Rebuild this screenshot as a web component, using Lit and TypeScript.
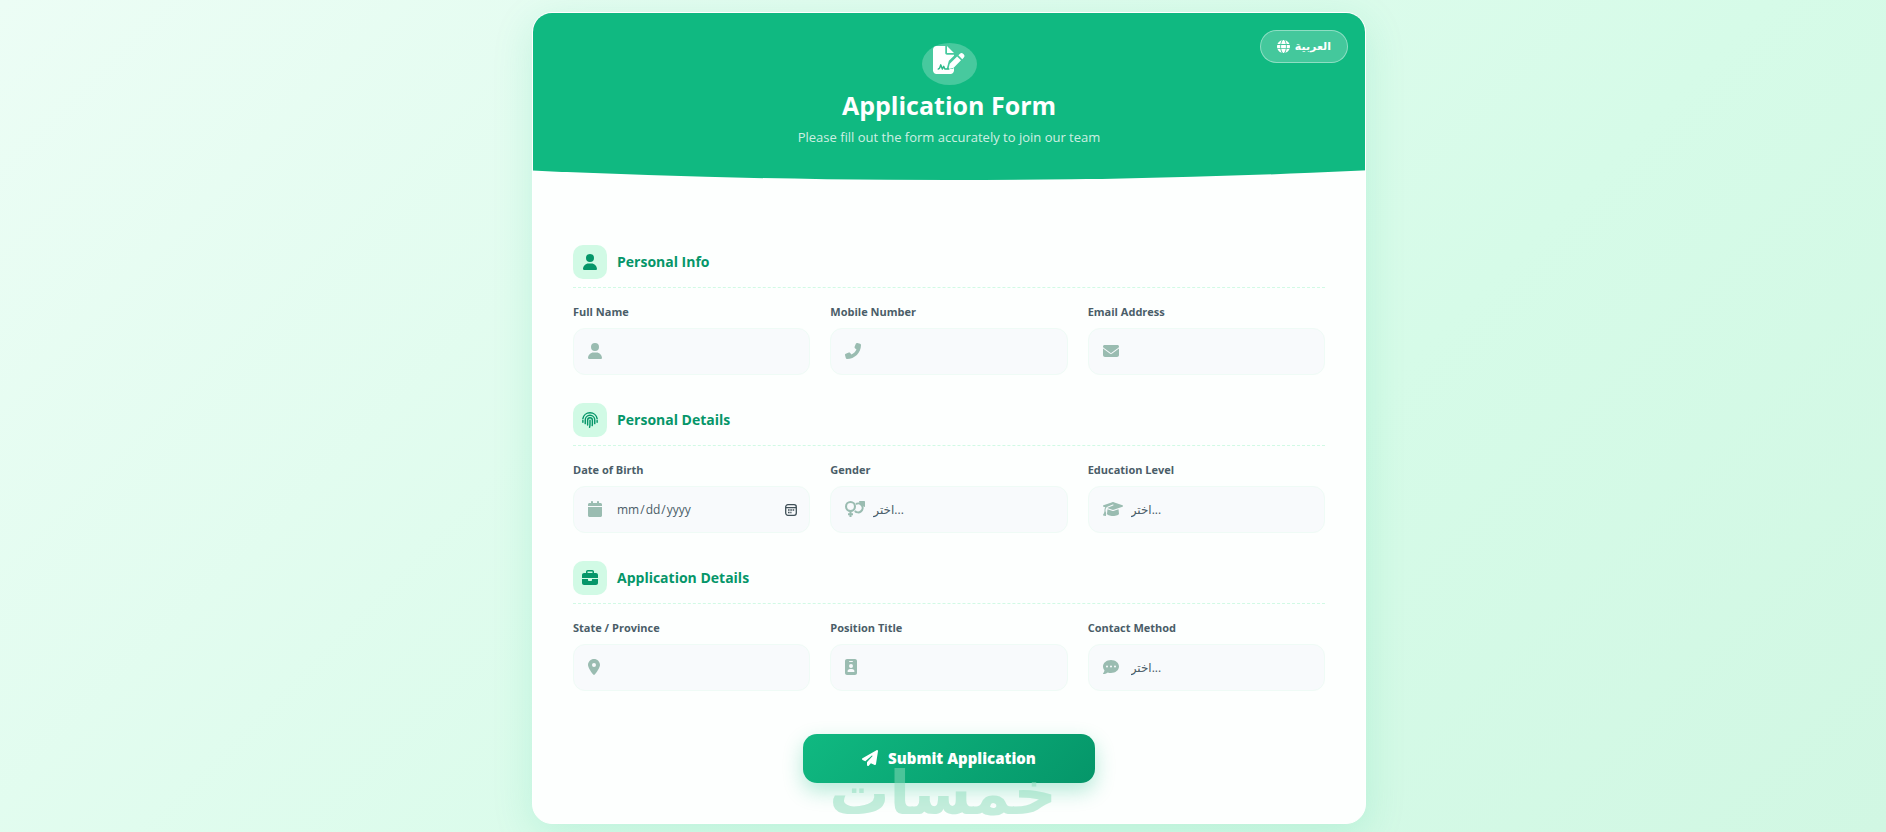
import { LitElement, html, css, svg, TemplateResult } from "lit";
import { customElement, property } from "lit/decorators.js";

interface Glyph {
  w: number;
  art: TemplateResult;
}

const solid = (w: number, d: string): Glyph => ({ w, art: svg`<path d=${d}></path>` });

const GLYPHS: Record<string, Glyph> = {
  user: solid(448, "M224 256A128 128 0 1 0 224 0a128 128 0 1 0 0 256zm-45.7 48C79.8 304 0 383.8 0 482.3C0 498.7 13.3 512 29.7 512H418.3c16.4 0 29.7-13.3 29.7-29.7C448 383.8 368.2 304 269.7 304H178.3z"),
  phone: {
    w: 512,
    art: svg`<path transform="matrix(-1 0 0 1 512 0)" d="M164.9 24.6c-7.7-18.6-28-28.5-47.4-23.2l-88 24C12.1 30.2 0 46 0 64C0 311.4 200.6 512 448 512c18 0 33.8-12.1 38.6-29.5l24-88c5.3-19.4-4.6-39.7-23.2-47.4l-96-40c-16.3-6.8-35.2-2.1-46.3 11.6L304.7 368C234.3 334.7 177.3 277.7 144 207.3L193.3 167c13.7-11.2 18.4-30 11.6-46.3l-40-96z"></path>`,
  },
  envelope: solid(512, "M48 64C21.5 64 0 85.5 0 112c0 15.1 7.1 29.3 19.2 38.4L236.8 313.6c11.4 8.5 27 8.5 38.4 0L492.8 150.4c12.1-9.1 19.2-23.3 19.2-38.4c0-26.5-21.5-48-48-48H48zM0 176V384c0 35.3 28.7 64 64 64H448c35.3 0 64-28.7 64-64V176L294.4 339.2c-22.8 17.1-54 17.1-76.8 0L0 176z"),
  calendar: solid(448, "M96 32V64H48C21.5 64 0 85.5 0 112v48H448V112c0-26.5-21.5-48-48-48H352V32c0-17.7-14.3-32-32-32s-32 14.3-32 32V64H160V32c0-17.7-14.3-32-32-32S96 14.3 96 32zM448 192H0V464c0 26.5 21.5 48 48 48H400c26.5 0 48-21.5 48-48V192z"),
  genders: {
    w: 640,
    art: svg`<g fill="none" stroke="currentColor" stroke-width="66">
      <circle cx="176" cy="176" r="143"></circle>
      <path d="M176 320V512M96 426H256"></path>
      <path d="M350 96a143 143 0 1 1 -34 222"></path>
      <path d="M520 120L590 50"></path>
    </g><path d="M472 0H616c14 0 24 10 24 24V168c0 20-24 30-38 16L456 38C442 24 452 0 472 0z"></path>`,
  },
  cap: solid(640, "M320 32c-8.1 0-16.1 1.4-23.7 4.1L15.8 137.4C6.3 140.9 0 149.9 0 160s6.3 19.1 15.8 22.6l57.9 20.9C57.3 229.3 48 259.8 48 291.9v28.1c0 28.4-10.8 57.7-22.3 80.8c-6.5 13-13.9 25.8-22.5 37.6C0 442.7-.9 448.3 .9 453.4s6 8.9 11.2 10.2l64 16c4.2 1.1 8.7 .3 12.4-2s6.3-6.1 7.1-10.4c8.6-42.8 4.3-81.2-2.1-108.7C90.3 344.3 86 329.8 80 316.5V291.9c0-30.2 10.2-58.7 27.9-81.5c12.9-15.5 29.6-28 49.2-35.7l157-61.7c8.2-3.2 17.5 .8 20.7 9s-.8 17.5-9 20.7l-157 61.7c-12.4 4.9-23.3 12.4-32.2 21.6l159.6 57.6c7.6 2.7 15.6 4.1 23.7 4.1s16.1-1.4 23.7-4.1L624.2 182.6c9.5-3.4 15.8-12.5 15.8-22.6s-6.3-19.1-15.8-22.6L343.7 36.1C336.1 33.4 328.1 32 320 32zM128 408c0 35.3 86 72 192 72s192-36.7 192-72L496.7 262.6 354.5 314c-11.1 4-22.8 6-34.5 6s-23.5-2-34.5-6L143.3 262.6 128 408z"),
  pin: solid(384, "M215.7 499.2C267 435 384 279.4 384 192C384 86 298 0 192 0S0 86 0 192c0 87.4 117 243 168.3 307.2c12.3 15.3 35.1 15.3 47.4 0zM192 128a64 64 0 1 1 0 128 64 64 0 1 1 0-128z"),
  badge: solid(384, "M64 0C28.7 0 0 28.7 0 64V448c0 35.3 28.7 64 64 64H320c35.3 0 64-28.7 64-64V64c0-35.3-28.7-64-64-64H64zm96 320h64c44.2 0 80 35.8 80 80c0 8.8-7.2 16-16 16H96c-8.8 0-16-7.2-16-16c0-44.2 35.8-80 80-80zm-32-96a64 64 0 1 1 128 0 64 64 0 1 1 -128 0zM144 64h96c8.8 0 16 7.2 16 16s-7.2 16-16 16H144c-8.8 0-16-7.2-16-16s7.2-16 16-16z"),
  comment: solid(512, "M256 448c141.4 0 256-93.1 256-208S397.4 32 256 32S0 125.1 0 240c0 45.1 17.7 86.8 47.7 120.9c-1.9 24.5-11.4 46.3-21.4 62.9c-5.5 9.2-11.1 16.6-15.2 21.6c-2.1 2.5-3.7 4.4-4.9 5.7c-.6 .6-1 1.1-1.3 1.4l-.3 .3C0 457.4-1.3 464.2 1.2 470.2c2.5 6 8.3 9.8 14.8 9.8c28.7 0 57.6-8.9 81.6-19.3c22.9-10 42.4-21.9 54.3-30.6c31.8 11.5 67 17.9 104.1 17.9zM128 208a32 32 0 1 1 0 64 32 32 0 1 1 0-64zm128 0a32 32 0 1 1 0 64 32 32 0 1 1 0-64zm96 32a32 32 0 1 1 64 0 32 32 0 1 1 -64 0z"),
  briefcase: solid(512, "M184 48H328c4.4 0 8 3.6 8 8V96H176V56c0-4.4 3.6-8 8-8zm-56 8V96H64C28.7 96 0 124.7 0 160v96H192 320 512V160c0-35.3-28.7-64-64-64H384V56c0-30.9-25.1-56-56-56H184c-30.9 0-56 25.1-56 56zM512 288H320v32c0 17.7-14.3 32-32 32H224c-17.7 0-32-14.3-32-32V288H0V416c0 35.3 28.7 64 64 64H448c35.3 0 64-28.7 64-64V288z"),
  plane: solid(512, "M498.1 5.6c10.1 7 15.4 19.1 13.5 31.2l-64 416c-1.5 9.7-7.4 18.2-16 23s-18.9 5.4-28 1.6L284 427.7l-68.5 74.1c-8.9 9.7-22.9 12.9-35.2 8.1S160 493.2 160 480V396.4c0-4 1.5-7.8 4.2-10.7L331.8 202.8c5.8-6.3 5.6-16-.4-22s-15.7-6.4-22-.7L106 360.8 17.7 316.6C7.1 311.3 .3 300.7 0 288.9s5.9-22.8 16.1-28.7l448-256c10.7-6.1 23.9-5.5 34 1.4z"),
  fingerprint: {
    w: 512,
    art: svg`<g fill="none" stroke="currentColor" stroke-width="46" stroke-linecap="round">
      <path d="M28 214C44 104 140 24 256 24s212 80 228 190"></path>
      <path d="M484 270v58M28 270v58"></path>
      <path d="M104 372V256a152 152 0 0 1 304 0V372"></path>
      <path d="M180 416V262a76 76 0 0 1 152 0V384c0 18-2 34-6 50"></path>
      <path d="M256 262V380c0 38-4 72-14 108"></path>
    </g>`,
  },
  globe: {
    w: 512,
    art: svg`<path fill-rule="evenodd" d="M352 256c0 22-1 43-3 64H163c-2-21-3-42-3-64s1-43 3-64h186c2 21 3 42 3 64zm29-64h123a256 256 0 0 1 0 128H381a650 650 0 0 0 0-128zm112-32H377c-10-64-30-117-55-151 78 21 142 78 171 151zM344 160H168c6-36 15-68 27-94C206 41 218 24 229 13 241 3 249 0 256 0s15 3 27 13c11 11 23 28 34 53 12 26 21 58 27 94zm-209 0H19C48 87 112 30 190 9c-25 34-45 87-55 151zM8 192h123a650 650 0 0 0 0 128H8a256 256 0 0 1 0-128zm187 254c-12-26-21-58-27-94h176c-6 36-15 68-27 94-11 25-23 42-34 53-12 10-20 13-27 13s-15-3-27-13c-11-11-23-28-34-53zM135 352c10 64 30 117 55 151C112 482 48 425 19 352h116zm358 0c-29 73-93 130-171 151 25-34 45-87 55-151h116z"></path>`,
  },
  signature: {
    w: 576,
    art: svg`<path d="M64 0C28.7 0 0 28.7 0 64V448c0 35.3 28.7 64 64 64H320c35.3 0 64-28.7 64-64V400l-30 20H250l40-150 94-90V160H256c-17.7 0-32-14.3-32-32V0H64zM256 0V128H384L256 0z"></path>
      <path d="M86 424c22 0 34-10 40-30l16-50 28 78 26-50 20 50h84" fill="none" stroke="#2fba8a" stroke-width="26" stroke-linejoin="round"></path>
      <path d="M549.8 139.7c-15.6-15.6-40.9-15.6-56.600 0l-29.4 29.4 71 71 29.4-29.4c15.6-15.6 15.6-40.9 0-56.600l-14.4-14.4zM311.9 321c-4.1 4.1-7 9.2-8.4 14.9l-15 60.1c-1.4 5.5 .2 11.2 4.2 15.2s9.7 5.6 15.2 4.2l60.1-15c5.6-1.4 10.8-4.3 14.9-8.4L512.1 262.7l-71-71L311.9 321z"></path>`,
  },
};

@customElement("fa-glyph")
class FaGlyph extends LitElement {
  @property() name = "user";
  static styles = css`
    :host {
      display: inline-flex;
      height: 1em;
    }
    svg {
      height: 1em;
      width: auto;
      fill: currentColor;
      overflow: visible;
    }
  `;
  render() {
    const g = GLYPHS[this.name];
    return html`<svg viewBox="0 0 ${g.w} 512" aria-hidden="true">${g.art}</svg>`;
  }
}

interface Field {
  id: string;
  label: string;
  icon: string;
  kind: "text" | "tel" | "email" | "date" | "select";
}

interface Section {
  title: string;
  icon: string;
  fields: Field[];
}

const SECTIONS: Section[] = [
  {
    title: "Personal Info",
    icon: "user",
    fields: [
      { id: "name", label: "Full Name", icon: "user", kind: "text" },
      { id: "mobile", label: "Mobile Number", icon: "phone", kind: "tel" },
      { id: "email", label: "Email Address", icon: "envelope", kind: "email" },
    ],
  },
  {
    title: "Personal Details",
    icon: "fingerprint",
    fields: [
      { id: "birth", label: "Date of Birth", icon: "calendar", kind: "date" },
      { id: "gender", label: "Gender", icon: "genders", kind: "select" },
      { id: "education", label: "Education Level", icon: "cap", kind: "select" },
    ],
  },
  {
    title: "Application Details",
    icon: "briefcase",
    fields: [
      { id: "state", label: "State / Province", icon: "pin", kind: "text" },
      { id: "position", label: "Position Title", icon: "badge", kind: "text" },
      { id: "contact", label: "Contact Method", icon: "comment", kind: "select" },
    ],
  },
];

@customElement("app-root")
class AppRoot extends LitElement {
  static styles = css`
    * {
      box-sizing: border-box;
    }
    :host {
      display: block;
      min-height: 100vh;
      box-sizing: border-box;
      padding: 12px 12px 8px 24px;
      background: linear-gradient(135deg, #ecfdf5 0%, #d6fbe8 65%, #d1f7e3 100%);
      font-family: "Open Sans", "Noto Sans", "DejaVu Sans", sans-serif;
      color: #4a5d68;
    }
    .card {
      position: relative;
      max-width: 834px;
      margin: 0 auto;
      border: 1px solid #fff;
      border-radius: 20px;
      background: #fdfffe;
      box-shadow: 0 10px 40px rgba(16, 185, 129, 0.15);
    }
    .hero {
      display: flex;
      flex-direction: column;
      align-items: center;
      padding: 30px 16px 32px;
      border-radius: 19px 19px 0 0;
      background: #10b981;
      clip-path: ellipse(150% 100% at 50% 0);
      color: #fff;
      text-align: center;
    }
    .emblem {
      display: flex;
      justify-content: center;
      align-items: flex-start;
      width: 55px;
      height: 42px;
      padding-top: 3px;
      border-radius: 50%;
      background: rgba(255, 255, 255, 0.23);
      font-size: 28px;
    }
    h1 {
      margin: 2px 0 0;
      font-size: 25px;
      line-height: 36px;
      font-weight: 700;
    }
    .lead {
      margin: 4px 0 0;
      font-size: 13px;
      line-height: 21px;
      color: rgba(255, 255, 255, 0.8);
    }
    .lang {
      position: absolute;
      top: 17px;
      right: 17px;
      display: flex;
      align-items: center;
      gap: 5px;
      height: 33px;
      padding: 0 16px;
      border: 1px solid rgba(255, 255, 255, 0.4);
      border-radius: 17px;
      background: rgba(255, 255, 255, 0.22);
      color: #fff;
      font: 700 11px "DejaVu Sans", sans-serif;
    }
    .lang fa-glyph {
      font-size: 13px;
    }
    form {
      padding: 65px 40px 40px;
    }
    section {
      margin-bottom: 28px;
    }
    .head {
      display: flex;
      align-items: center;
      gap: 10px;
      padding-bottom: 8px;
      margin-bottom: 15px;
      border-bottom: 1px dashed #d1fae5;
      color: #059669;
    }
    .tile {
      display: grid;
      place-items: center;
      width: 34px;
      height: 34px;
      border-radius: 10px;
      background: #d1fae5;
      font-size: 16px;
    }
    h2 {
      margin: 0;
      font-size: 14px;
      line-height: 20px;
      font-weight: 700;
    }
    .row {
      display: grid;
      grid-template-columns: repeat(3, minmax(0, 1fr));
      gap: 20px;
    }
    label {
      display: block;
      margin-bottom: 7px;
      font-size: 11px;
      line-height: 18px;
      font-weight: 700;
    }
    .control {
      position: relative;
    }
    .control fa-glyph {
      position: absolute;
      left: 15px;
      top: 15px;
      font-size: 16px;
      color: #9abcb1;
      pointer-events: none;
    }
    .box {
      display: block;
      width: 100%;
      height: 47px;
      padding: 0 12px 0 42px;
      border: 1px solid #effbf6;
      border-radius: 12px;
      background: #f8fafc;
      color: #4a5d68;
      font: 12px "Open Sans", "DejaVu Sans", sans-serif;
      appearance: none;
      outline: none;
    }
    .box::-webkit-calendar-picker-indicator {
      width: 12px;
      height: 12px;
      padding: 0;
      background: url("data:image/svg+xml,%3Csvg xmlns='http://www.w3.org/2000/svg' viewBox='0 0 12 12'%3E%3Crect x='.7' y='.7' width='10.6' height='10.6' rx='2.2' fill='none' stroke='%23405058' stroke-width='1.3'/%3E%3Cpath d='M1 3.6H11' stroke='%23405058' stroke-width='1.2'/%3E%3Cpath d='M3 6H9.2M3 8.5H6.5' stroke='%23405058' stroke-width='1.5' stroke-dasharray='1.6 .7'/%3E%3C/svg%3E")
        center / 12px 12px no-repeat;
    }
    .actions {
      display: flex;
      justify-content: center;
      padding-top: 15px;
    }
    .submit {
      display: flex;
      align-items: center;
      justify-content: center;
      gap: 10px;
      width: 292px;
      height: 49px;
      padding: 0 0 2px;
      border: 0;
      border-radius: 14px;
      background: linear-gradient(135deg, #10b981, #059669);
      box-shadow: 0 8px 20px rgba(16, 185, 129, 0.3);
      color: #fff;
      font: 800 15px "Open Sans", sans-serif;
    }
    .submit fa-glyph {
      font-size: 16px;
    }
    .mark {
      position: absolute;
      left: 0;
      right: 0;
      bottom: 0;
      padding-right: 12px;
      text-align: center;
      font: 700 60px/60px "DejaVu Sans", sans-serif;
      color: #8bddbb;
      opacity: 0.5;
      pointer-events: none;
    }
    @media (max-width: 640px) {
      .row {
        grid-template-columns: 1fr;
      }
    }
  `;

  control(f: Field) {
    if (f.kind === "select")
      return html`<select class="box" id=${f.id}>
        <option>اختر...</option>
      </select>`;
    return html`<input class="box" id=${f.id} type=${f.kind} />`;
  }

  render() {
    return html`
      <main class="card">
        <header class="hero">
          <span class="emblem"><fa-glyph name="signature"></fa-glyph></span>
          <h1>Application Form</h1>
          <p class="lead">Please fill out the form accurately to join our team</p>
        </header>
        <button class="lang" type="button"><fa-glyph name="globe"></fa-glyph><span lang="ar">العربية</span></button>
        <form>
          ${SECTIONS.map(
            (s) => html`<section>
              <div class="head">
                <span class="tile"><fa-glyph name=${s.icon}></fa-glyph></span>
                <h2>${s.title}</h2>
              </div>
              <div class="row">
                ${s.fields.map(
                  (f) => html`<div>
                    <label for=${f.id}>${f.label}</label>
                    <div class="control">
                      ${this.control(f)}
                      <fa-glyph name=${f.icon}></fa-glyph>
                    </div>
                  </div>`
                )}
              </div>
            </section>`
          )}
          <div class="actions">
            <button class="submit" type="button"><fa-glyph name="plane"></fa-glyph>Submit Application</button>
          </div>
        </form>
        <div class="mark" lang="ar">خمسات</div>
      </main>
    `;
  }
}
